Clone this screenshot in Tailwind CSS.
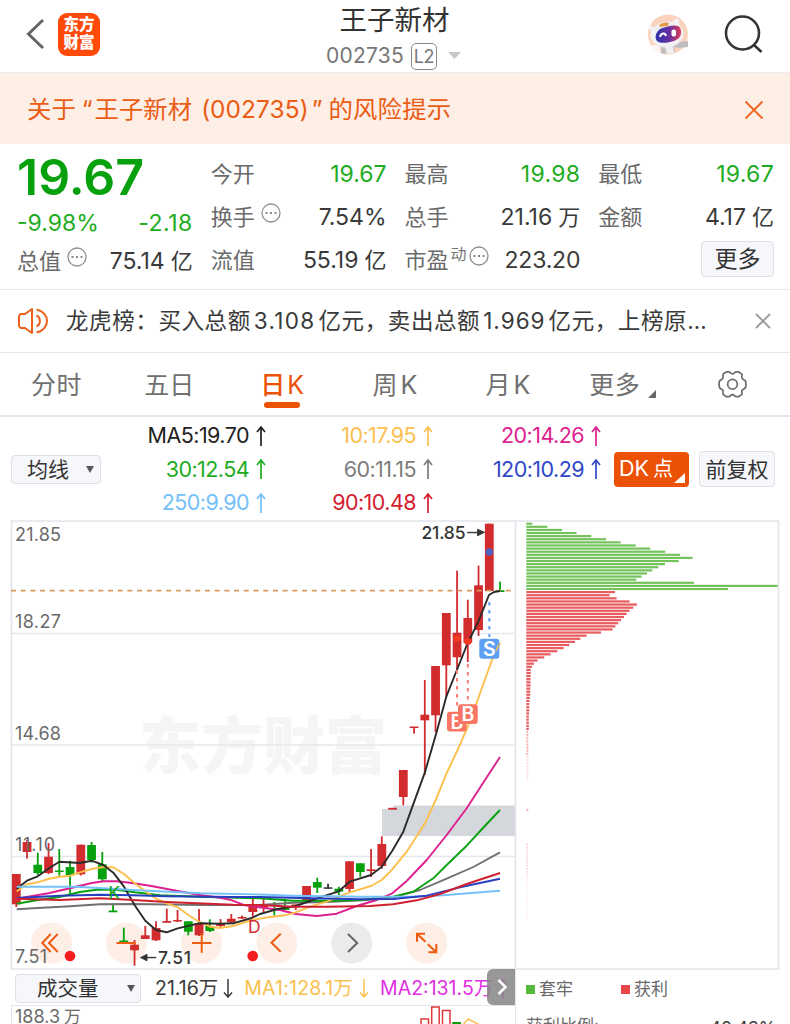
<!DOCTYPE html>
<html lang="zh-CN">
<head>
  <meta charset="UTF-8" />
  <meta name="viewport" content="width=device-width, initial-scale=1.0"/>
  <title>王子新材 002735</title>
  <script src="https://cdn.jsdelivr.net/npm/@tailwindcss/browser@4"></script>
</head>
<body class="w-[790px] h-[1024px] overflow-hidden bg-white text-[#3a3a3a] font-['Inter','Noto_Sans_CJK_SC',sans-serif] whitespace-nowrap">

  <!-- Header -->
  <header class="h-[73px] border-b border-[#ececf0] grid grid-cols-[1fr_auto_1fr] items-center">
    <div class="flex items-center pl-[25px] pb-[6px]">
      <svg class="w-[20px] h-[34px]" viewBox="0 0 20 34" fill="none" stroke="#666" stroke-width="3"><path d="M18 3 3.500 17 18 31"/></svg>
      <div class="ml-[13px] w-[42px] h-[43px] rounded-[9px] bg-[#ff4a0a] text-white font-black text-[15.500px] leading-[18px] flex flex-col items-center justify-center">
        <span>东方</span>
        <span>财富</span>
      </div>
    </div>
    <div class="flex flex-col items-center pt-[2px] pr-[3px]">
      <h1 class="text-[27.500px] leading-[36px] text-[#333] pl-[2px]">王子新材</h1>
      <div class="flex items-center h-[36px] text-[#777]">
        <span class="text-[21px] tracking-[0.200px]">002735</span>
        <span class="ml-[7px] w-[26px] h-[27px] border-[1.500px] border-[#8a8a8a] rounded-[5px] text-[18px] flex items-center justify-center tracking-[-0.500px]">L2</span>
        <svg class="ml-[11px] w-[13px] h-[8px]" viewBox="0 0 13 8"><path d="M0 0h13L6.500 7z" fill="#c8c8c8"/></svg>
      </div>
    </div>
    <div class="flex items-center justify-end pr-[26px] pb-[5px]">
      <svg class="w-[42px] h-[42px]" viewBox="0 0 42 42">
        <circle cx="21" cy="20.500" r="20" fill="#fbd3bd"/>
        <path d="M12 32c4-3 12-3 15 0l5-4 9-1v6l-9 1-5-1 1 5-7 2-8-1 2-5z" fill="#c0bdc1"/>
        <path d="M4 31l8 0 2 8c-4-1-8-4-10-8z" fill="#fdf6f2"/>
        <path d="M18 33h8l1 6-7 1z" fill="#f1eeee"/>
        <ellipse cx="20" cy="20.500" rx="16.500" ry="13" fill="#f1f0f3" transform="rotate(-8 20 20.500)"/>
        <path d="M25 8c4-4 6-4 7-2l1 7zM4 17c-3-3-3-5-1-6l5 3z" fill="#f3f2f4"/>
        <path d="M12 11c3-2 6-3 10-2l-1 3-8 1z" fill="#e79a4c"/>
        <path d="M14 14.500c6-2 12-4 17-2.500 4 2 4 9 1 12-4 4-14 5.500-19 4.500-6-1-6-10 1-14z" fill="url(#visor)"/>
        <path d="M13 23c1-4 5-5 6-1" fill="none" stroke="#fff" stroke-width="2"/>
        <rect x="24.500" y="15.500" width="4.500" height="7" rx="2" fill="#fff"/>
        <defs><linearGradient id="visor"><stop offset="0" stop-color="#2b34a8"/><stop offset=".55" stop-color="#6a2fa0"/><stop offset="1" stop-color="#e0405a"/></linearGradient></defs>
      </svg>
      <svg class="ml-[35px] w-[40px] h-[40px]" viewBox="0 0 40 40" fill="none" stroke="#333" stroke-width="2.500"><circle cx="18.500" cy="18" r="16.500"/><path d="m29.500 29.500 8 7.500"/></svg>
    </div>
  </header>

  <!-- Risk banner -->
  <div class="h-[71px] bg-[#fdeee6] text-[#eb5c14] text-[24.400px] flex items-center pt-[2px] pl-[27px] pr-[26px]">
    <span>关于</span>
    <span class="ml-[6px]">“</span>
    <span class="ml-[2px]">王子新材</span>
    <span class="ml-[9px] tracking-[0.100px]">(002735)</span>
    <span class="ml-[3px]">”</span>
    <span class="ml-[6px] tracking-[0.200px]">的风险提示</span>
    <svg class="ml-auto w-[20px] h-[20px]" viewBox="0 0 20 20" stroke="#ee6a26" stroke-width="2"><path d="m1.500 1.500 17 17M18.500 1.500l-17 17"/></svg>
  </div>

  <!-- Quote -->
  <section class="h-[146px] border-b border-[#e8e8ea] pt-[9px] pl-[17px] pr-[16px] grid grid-cols-4 gap-x-[18px] text-[23px]">
    <div>
      <div class="h-[49px] flex items-center text-[50px] font-semibold text-[#07a10d]">19.67</div>
      <div class="h-[43px] flex items-center justify-between text-[#1dac22]"><span>-9.98%</span><span class="tracking-[0.500px]">-2.18</span></div>
      <div class="h-[32px] flex items-center">
        <span class="text-[22px] text-[#6a6a6a]">总值</span>
        <svg class="ml-[6px] -mt-[9px] w-[20px] h-[20px]" viewBox="0 0 20 20"><circle cx="10" cy="10" r="9" fill="none" stroke="#909090" stroke-width="1.300"/><path d="M4.500 9h2v2h-2zM9 9h2v2H9zM13.500 9h2v2h-2z" fill="#888"/></svg>
        <span class="ml-auto">75.14<span class="ml-[6px] text-[22px]">亿</span></span>
      </div>
    </div>
    <div>
      <div class="h-[43px] flex items-center justify-between"><span class="text-[22px] text-[#6a6a6a]">今开</span><span class="text-[#1dac22]">19.67</span></div>
      <div class="h-[43px] flex items-center">
        <span class="text-[22px] text-[#6a6a6a]">换手</span>
        <svg class="ml-[6px] -mt-[9px] w-[20px] h-[20px]" viewBox="0 0 20 20"><circle cx="10" cy="10" r="9" fill="none" stroke="#909090" stroke-width="1.300"/><path d="M4.500 9h2v2h-2zM9 9h2v2H9zM13.500 9h2v2h-2z" fill="#888"/></svg>
        <span class="ml-auto">7.54%</span>
      </div>
      <div class="h-[43px] flex items-center justify-between"><span class="text-[22px] text-[#6a6a6a]">流值</span><span>55.19<span class="ml-[6px] text-[22px]">亿</span></span></div>
    </div>
    <div>
      <div class="h-[43px] flex items-center justify-between"><span class="text-[22px] text-[#6a6a6a]">最高</span><span class="text-[#1dac22] tracking-[0.300px]">19.98</span></div>
      <div class="h-[43px] flex items-center justify-between"><span class="text-[22px] text-[#6a6a6a]">总手</span><span>21.16<span class="ml-[6px] text-[22px]">万</span></span></div>
      <div class="h-[43px] flex items-center">
        <span class="text-[22px] text-[#6a6a6a]">市盈</span>
        <span class="ml-[2px] -mt-[14px] text-[16px] text-[#777]">动</span>
        <svg class="ml-[2px] -mt-[9px] w-[20px] h-[20px]" viewBox="0 0 20 20"><circle cx="10" cy="10" r="9" fill="none" stroke="#909090" stroke-width="1.300"/><path d="M4.500 9h2v2h-2zM9 9h2v2H9zM13.500 9h2v2h-2z" fill="#888"/></svg>
        <span class="ml-auto tracking-[-0.200px]">223.20</span>
      </div>
    </div>
    <div>
      <div class="h-[43px] flex items-center justify-between"><span class="text-[22px] text-[#6a6a6a]">最低</span><span class="text-[#1dac22] tracking-[0.300px]">19.67</span></div>
      <div class="h-[43px] flex items-center justify-between"><span class="text-[22px] text-[#6a6a6a]">金额</span><span>4.17<span class="ml-[6px] text-[22px]">亿</span></span></div>
      <div class="h-[43px] flex items-center justify-end -mt-[2px]">
        <button class="w-[73px] h-[36px] pt-[2px] border border-[#e0e0e6] rounded-[4px] bg-[#f6f7fa] text-[23px] leading-none text-[#333]">更多</button>
      </div>
    </div>
  </section>

  <!-- News ticker -->
  <div class="h-[63px] border-b border-[#e8e8ea] flex items-center pl-[17px] pr-[19px] text-[22.500px]">
    <svg class="w-[32px] h-[28px]" viewBox="0 0 32 28" fill="none" stroke="#ee5f1a" stroke-width="2" stroke-linejoin="round"><path d="M15 2v24l-7-5H3.500L2 19V9l1.500-2H8zM19.500 8.500c4.500 2 4.500 9 0 11M19.500 2.500c14 3 14 20 0 23"/></svg>
    <p class="ml-[17px] tracking-[0.600px]">龙虎榜：买入总额<span class="mx-[3px] tracking-[1.300px]">3.108</span>亿元，卖出总额<span class="mx-[3px] tracking-[1px]">1.969</span>亿元，上榜原…</p>
    <svg class="ml-auto w-[16px] h-[16px]" viewBox="0 0 16 16" stroke="#999" stroke-width="1.800"><path d="m1 1 14 14M15 1 1 15"/></svg>
  </div>

  <!-- Period tabs -->
  <nav class="h-[64px] border-b-2 border-[#e4e4ea] grid grid-cols-7 items-center text-[25px] text-[#707070]">
    <span class="pt-[3px] text-center tracking-[0.500px]">分时</span>
    <span class="pt-[3px] text-center">五日</span>
    <span class="relative pt-[3px] text-center text-[#ec5206] font-medium">日<span class="ml-[2px] font-normal">K</span><i class="absolute left-[38px] bottom-[-4px] w-[36px] h-[6px] rounded-full bg-[#ec5206]"></i></span>
    <span class="pt-[3px] text-center">周<span class="ml-[3px]">K</span></span>
    <span class="pt-[3px] text-center">月<span class="ml-[3px]">K</span></span>
    <span class="flex items-center justify-center pt-[3px] pl-[4px] tracking-[0.500px]">更多<svg class="ml-[8px] mt-[17px] w-[8px] h-[8px]" viewBox="0 0 8 8"><path d="M8 0v8H0z" fill="#666"/></svg></span>
    <svg class="justify-self-center mr-[2px] mt-[1px] w-[29px] h-[29px]" viewBox="0 0 30 30" fill="none" stroke="#6c6c6c" stroke-width="1.800" stroke-linejoin="round"><path d="M8.500 2h3c1 0 1.500 2 3.500 2s2.500-2 3.500-2h3l3 2c1 1-.5 3 .5 4.500S28 10.500 28.500 11.500l.5 3.500-.5 3c-.5 1.500-2.500 1.500-3.500 3s.5 3.500-.5 4.500l-3 2h-3c-1 0-1.500-2-3.500-2s-2.500 2-3.500 2h-3l-3-2c-1-1 .5-3-.5-4.500s-3-1.500-3.500-3L1 15l.5-3.500C2 10.500 4 10 5 8.500S4.500 5 5.500 4z"/><circle cx="15" cy="14.800" r="5"/></svg>
  </nav>

  <!-- Moving averages -->
  <section class="h-[100px] flex items-center pl-[11px] pt-[4px]">
    <button class="w-[90px] h-[29px] border border-[#dedee4] rounded-[4px] bg-[#f6f7fa] flex items-center pl-[15px] text-[21px] leading-none text-[#333]">均线<svg class="ml-[17px] w-[8px] h-[7px]" viewBox="0 0 9 8"><path d="M0 0h9L4.500 8z" fill="#555"/></svg></button>
    <div id="averages" class="w-[500px] grid grid-cols-[165px_167px_168px] auto-rows-[33.500px] text-[21.500px] tracking-[-0.550px]"></div>
    <button class="ml-[13px] w-[75px] h-[35px] rounded-[4px] bg-[#ec5206] text-white flex items-center pl-[5px] text-[21.500px] leading-none">DK<span class="ml-[4px] text-[20px]">点</span><svg class="mt-[18px] ml-[1px] w-[11px] h-[10px]" viewBox="0 0 11 10"><path d="M11 0v10H0z" fill="#fff"/></svg></button>
    <button class="ml-[10px] w-[76px] h-[36px] border border-[#e0e0e6] rounded-[4px] bg-[#f6f7fa] text-[21px] leading-none text-[#333]">前复权</button>
  </section>

  <!-- K-line chart and cost distribution -->
  <svg class="block w-[790px] h-[453px]" viewBox="0 517 790 453" fill="none">
    <text x="139" y="769" font-size="62" font-weight="900" fill="#f5f5f5" textLength="248">东方财富</text>
    <rect x="382" y="809" width="12" height="27" fill="#d4d7dc"/>
    <rect x="393" y="805.500" width="122" height="30.500" fill="#d4d7dc"/>
    <path d="M11 633.500h504M11 745h504M11 856.500h504" stroke="#e6e7ee" stroke-width="1.500"/>
    <path d="M11.500 521h767v448H11.500zM515.500 521v448" stroke="#e4e5eb" stroke-width="1.700"/>
    <g fill="#fdeee6">
      <circle cx="51.500" cy="943" r="20.500"/><circle cx="126.500" cy="943" r="20.500"/><circle cx="201.500" cy="943" r="20.500"/>
      <circle cx="276.800" cy="943" r="20.500"/><circle cx="351.700" cy="943" r="20.500" fill="#ebebeb"/><circle cx="426.700" cy="943" r="20.500"/>
    </g>
    <g id="candles"></g>
    <g fill="#6a6a6a" font-size="18">
      <text x="15" y="541" textLength="46">21.85</text>
      <text x="15" y="627.500" textLength="46">18.27</text>
      <text x="15" y="739.500" textLength="46">14.68</text>
      <text x="15" y="851" textLength="40">11.10</text>
      <text x="15" y="962.500" textLength="32">7.51</text>
    </g>
    <path d="M11 590.700h500" stroke="#d69a62" stroke-width="1.700" stroke-dasharray="5 4.700"/>
    <g id="lines" stroke-width="1.900" stroke-linejoin="round"></g>
    <!-- Trade marks -->
    <path d="M457 670v37M467.800 664v38" stroke="#f88070" stroke-width="2" stroke-dasharray="3.500 4.500"/>
    <path d="M489.300 602v35" stroke="#5c9ff5" stroke-width="2" stroke-dasharray="3.500 4.500"/>
    <circle cx="489.300" cy="552" r="3.700" fill="#4c62c4"/>
    <circle cx="457" cy="638.500" r="3.600" fill="#f33a20"/>
    <circle cx="467.800" cy="641.500" r="3.600" fill="#f33a20"/>
    <g font-weight="600" font-size="19.500" text-anchor="middle">
      <rect x="447" y="711.700" width="19.700" height="19.700" rx="3" fill="#f97665"/>
      <text x="457" y="728.700" fill="#fff">B</text>
      <rect x="458" y="704.300" width="19.700" height="19.700" rx="3" fill="#f97665"/>
      <text x="468" y="721.200" fill="#fff">B</text>
      <rect x="479.300" y="638.800" width="20" height="20" rx="3" fill="#5c9ff5"/>
      <text x="489.300" y="655.900" fill="#fff">S</text>
    </g>
    <path d="m496 651 2.500-6" stroke="#fcbf4a" stroke-width="1.500"/>
    <g font-size="17.500" font-weight="500" fill="#333">
      <text x="421.500" y="539" textLength="44">21.85</text>
      <text x="158" y="964" textLength="33">7.51</text>
      <path d="M467.500 532.300h10v-3l7 3-7 3.500v-3h-10zM156 957.300h-9v-3l-6.500 3.300 6.500 3.200v-3h9z" stroke="#333" stroke-width=".9"/>
    </g>
    <text x="108.500" y="899" font-size="17" fill="#07a10d">K</text>
    <text x="248" y="932.500" font-size="17.500" fill="#d22c2f">D</text>
    <circle cx="70" cy="956" r="5.300" fill="#f51d20"/>
    <circle cx="252.700" cy="956" r="5.300" fill="#f51d20"/>
    <!-- Chart controls -->
    <g stroke="#ee5c12" stroke-width="2">
      <path d="M50.700 934 42.300 943l8.400 9M57.700 934 49 943l8.700 9"/>
      <path d="M116.500 943h19.200M192 943h19.500M201.700 933.300v19.500"/>
      <path d="m280.700 933.700-9.200 9 9.200 9"/>
      <path d="m348 934 9.200 9-9.200 9" stroke="#666"/>
      <path d="M425 933.700h-8v8M417 933.700l8.500 8M436.300 944v8.300h-8M436.300 952.300l-8.500-8"/>
    </g>
    <g id="chips"></g>
  </svg>

  <!-- Volume and legend -->
  <section class="h-[54px] flex">
    <div class="w-[516px] border-r-[1.500px] border-[#e4e5eb]">
      <div class="relative h-[35px] flex items-center pt-[1px] pl-[15px] text-[19.500px]">
        <button class="w-[126px] h-[29px] pt-[2px] border border-[#dedee4] rounded-[4px] bg-[#f6f7fa] flex items-center pl-[21px] text-[20.500px] leading-none text-[#333]">成交量<svg class="ml-[28px] mb-[2px] w-[8px] h-[7px]" viewBox="0 0 9 8"><path d="M0 0h9L4.500 8z" fill="#555"/></svg></button>
        <span class="ml-[14px] pt-[1px] flex items-center">21.16万<svg class="ml-[5px] w-[10px] h-[19px]" viewBox="0 0 10 19" fill="none" stroke="#3a3a3a" stroke-width="1.500"><path d="M5 0v18M1 13.500l4 4.500 4-4.500"/></svg></span>
        <span class="ml-[11px] pt-[1px] flex items-center text-[#fbc04e] tracking-[0.200px]">MA1:128.1万<svg class="ml-[6px] w-[10px] h-[19px]" viewBox="0 0 10 19" fill="none" stroke="#fbc04e" stroke-width="1.500"><path d="M5 0v18M1 13.500l4 4.500 4-4.500"/></svg></span>
        <span class="ml-[11px] pt-[1px] flex items-center text-[#e02fe0]">MA2:131.5万<svg class="ml-[5px] w-[10px] h-[19px]" viewBox="0 0 10 19" fill="none" stroke="#e02fe0" stroke-width="1.500"><path d="M5 19V1M1 5.500 5 1l4 4.500"/></svg></span>
        <span class="absolute right-0 -top-[1px] w-[28px] h-[36px] rounded-l-[6px] bg-[#858585]/85 flex items-center justify-center"><svg class="ml-[2px] w-[10px] h-[18px]" viewBox="0 0 10 18" fill="none" stroke="#fff" stroke-width="2.600"><path d="m1.500 2 7 7-7 7"/></svg></span>
      </div>
      <div class="ml-[11px] h-[19px] border-t-[1.500px] border-l-[1.500px] border-[#e4e5eb] flex justify-between overflow-hidden">
        <span class="pl-[3px] text-[18px] leading-[22px] text-[#6a6a6a]">188.3<span class="ml-[4px] text-[17px]">万</span></span>
        <svg class="w-[96px] h-[19px]" viewBox="420 1005 96 19" fill="none" stroke="#e0393c" stroke-width="1.500"><path d="M422 1025v-7h7.500v7M432.700 1025v-19h7.500v19M443.500 1025v-15.500h7.500v15.500"/><path d="M453.300 1021h8.700v4h-8.700z" fill="#07a10d" stroke="none"/><path d="m463 1025 6-7 12 6" stroke="#fcbf4a"/></svg>
      </div>
    </div>
    <div class="flex-1 pl-[10px] pr-[14px] text-[17px] text-[#6a6a6a]">
      <div class="h-[38px] pt-[1px] flex items-center">
        <i class="w-[9px] h-[9px] bg-[#57b83e]"></i><span class="ml-[4px] w-[82px]">套牢</span>
        <i class="w-[9px] h-[9px] bg-[#ea4548]"></i><span class="ml-[4px]">获利</span>
      </div>
      <div class="flex justify-between leading-[37px]"><span>获利比例:</span><span class="text-[17.500px] leading-[40px] text-[#3a3a3a]">40.43%</span></div>
    </div>
  </section>

  <script>
    // [label, color]
    const averages = [
      ["MA5:19.70", "#222"], ["10:17.95", "#fbc04e"], ["20:14.26", "#dd1f8f"],
      ["30:12.54", "#1dac22"], ["60:11.15", "#7d7d7d"], ["120:10.29", "#3048c8"],
      ["250:9.90", "#74c0f8"], ["90:10.48", "#d3202f"],
    ];
    document.getElementById("averages").innerHTML = averages.map(([label, color]) => `
      <span class="flex items-center justify-end" style="color:${color}">${label}
        <svg class="ml-[7px] w-[10px] h-[20px]" viewBox="0 0 10 20" fill="none" stroke="currentColor" stroke-width="1.700"><path d="M5 20V1M1 6l4-5 4 5"/></svg>
      </span>`).join("");

    // [body top, body bottom, wick top, wick bottom, color]
    const colors = { r: "#d22c2f", g: "#07a10d", k: "#333" };
    const candles = [
      [874, 904.3, 874, 907, "r"], [842, 852, 840, 858.6, "r"], [864.7, 873, 852.7, 875, "g"], [856.7, 873, 843, 874, "r"],
      [870.5, 872, 849, 875.7, "g"], [867, 875.3, 860.7, 896, "g"], [844.7, 874.3, 844.7, 875.5, "r"], [845, 860, 842, 862.7, "g"],
      [864.3, 879.3, 852, 881, "g"], [910.5, 912.3, 904.5, 912, "g"], [940.5, 942, 927.7, 942, "g"], [944.7, 950.3, 940, 965.7, "r"],
      [935.3, 939, 926, 939, "r"], [928, 940.3, 921.3, 941, "r"], [921, 922.8, 908.7, 922, "r"], [920, 921.5, 910, 922, "r"],
      [921.3, 931.7, 921, 935.3, "g"], [923.3, 935.3, 909, 936, "r"], [926, 931, 919.3, 932, "g"], [923, 926, 919, 927, "r"],
      [918.7, 922.3, 914, 923, "r"], [917, 918.5, 915.5, 919, "r"], [905.3, 912, 896.7, 916.7, "r"], [906, 907.7, 898.7, 912, "r"],
      [908, 909.5, 902, 915.7, "g"], [906.5, 910, 899, 910, "g"], [904.5, 906.5, 904.5, 910, "r"], [886, 900, 886, 900, "r"],
      [882, 887.7, 877.7, 893, "g"], [887.3, 888.8, 883.7, 888.7, "k"], [888.7, 891.7, 886.7, 895, "g"], [861.3, 889, 861.3, 892.7, "r"],
      [863.3, 872, 863.3, 876.7, "g"], [869.3, 871, 849, 877, "r"], [844, 866, 836.3, 868.7, "r"], [807.8, 809.7, 808, 809, "r"],
      [770, 797, 770, 805.3, "r"], [726.5, 728, 727, 733.7, "r"], [714.7, 720.3, 680, 775, "r"], [666, 715.3, 666, 732, "r"],
      [613, 665.3, 613, 696.7, "r"], [632.7, 657.3, 570.7, 670, "r"], [618, 642.7, 599.7, 662, "r"], [585.3, 630, 565.7, 636, "r"],
      [523.7, 591, 523.7, 591, "r"], [590.2, 592, 581.7, 592, "g"],
    ];
    document.getElementById("candles").innerHTML = candles.map(([top, bottom, high, low, c], i) => {
      const x = 16.3 + i * 10.75;
      return `<rect x="${x - 4.4}" y="${top}" width="8.800" height="${bottom - top}" fill="${colors[c]}"/>
        <rect x="${x - 0.9}" y="${high}" width="1.800" height="${low - high}" fill="${colors[c]}"/>`;
    }).join("");

    const lines = [
      ["#707070", "16.7,909.3 37.7,908 70,906.3 100,904.3 133,904 200,905 260,905 293,902.7 326.7,902 366.7,900 393,897.3 420,890 446.7,878.7 473.3,867 500,852.3"],
      ["#07a10d", "16.7,903.7 37.7,900 59.3,897 80,892 96.7,889.7 116.7,889.7 134.7,892.3 160,895.3 200,896.7 260,898.3 293,900.7 326.7,900.7 360,900 393.3,896.7 413.3,891.7 433.3,878.3 446.7,865 466.7,845.7 486.7,824 500,810"],
      ["#dd1f8f", "16.7,898.7 48.3,893.3 70,888.3 91.7,883 103.3,881.3 116.7,881.3 130,882.7 150,885.7 177.7,891 200,895 220,897.7 230,899.7 245,905.3 263,907.7 280,910 295.7,914 316.7,916 336.7,913.7 356.7,906 376.7,900 392.3,893.3 406.7,881 426.7,860 446.7,835 466.7,808.3 485,780 500,757"],
      ["#fcbf4a", "16.7,891.3 27,884.3 37.7,882.3 48.3,879 59.3,876.7 70,875.7 80,872.3 91.7,869 103.3,867 113.3,867.3 124,874 134.7,883.3 145.3,891.3 156,898.7 166.7,903.3 177.7,907.3 188.3,915 199,921.7 210,926.7 220,928 233,926 251.7,920 270,917 285,915.3 295.7,912.3 310,906.7 326.7,901.7 349.7,892.3 371,886 381.7,880 392.3,869.3 406.7,851.7 425,823.3 435,801.7 446.3,774 458.3,748.3 470,721.7 480,693.3 492,660 500,643"],
      ["#2b2b2b", "16.7,888.7 27,880.7 37.7,876.3 48.3,868.7 59.3,861.7 80,863 91.7,860.7 103.3,865 113.3,872.7 124,886.7 134.7,905.3 145.3,920.7 156,930 166.7,932.3 177.7,928.3 199,923.3 220,923.7 233,923.3 251.7,918 260,914 276.7,909.3 295.7,906 310,901 320,897.3 338.7,891.3 349.7,881.7 371,875 381.7,866.7 392.3,850.7 403.3,831.7 424.8,772.7 436.7,731.7 446.3,696.7 455.7,673 467.7,643 478.3,621.7 489,595 494,592 500,591"],
      ["#74c0f8", "16.7,886.7 76.7,886.7 133,890 200,893.3 260,894.5 293,895.7 360,896.7 410,896.7 443,895.3 500,890.7"],
      ["#2840c0", "16.7,898 60,895.7 100,894.7 133,895.3 166.7,896.3 233,897 260,897 310,898.3 360,899.3 393,899 426.7,895.7 460,887.3 500,878.7"],
      ["#cf2030", "16.7,898.7 60,900 100,898.3 133,900 166.7,902 233,904.7 260,905 293,906.7 326.7,906.7 370,906 393,904.3 416.7,900.3 440,894 466.7,884 500,873"],
    ];
    document.getElementById("lines").innerHTML = lines.map(([c, points]) => `<polyline points="${points}" stroke="${c}"/>`).join("");

    // Cost distribution bars, from the highest price down
    const trapped = [6, 21, 35.7, 50.3, 65, 79.7, 94.3, 109.3, 124, 139, 153.7, 166.3, 152.3, 138.7, 132, 126, 120.7, 115.3, 110, 167.7, 251.3, 201.7];
    const profit = [88.7, 83.3, 90.3, 103.3, 110.7, 107, 103.3, 100.3, 97.7, 94.7, 92, 89, 86.3, 74.7, 60.3, 54, 48.7, 43, 37.3, 31, 24.3, 18, 11.3, 7.7, 5.7,
      4.5, 4.5, 4.3, 4.3, 4.3, 4.3, 4, 4, 4, 3.5, 3.2, 3, 3, 3, 2.7, 2.5, 2.5, 2.5, 2.5, 2.5];
    const bar = (w, i, fill) => `<rect x="526.300" y="${522.6 + i * 3.11}" width="${w}" height="2.200" fill="${fill}"/>`;
    let chips = trapped.map((w, i) => bar(w, i, "#74c25c")).join("");
    chips += profit.map((w, i) => bar(w, i + trapped.length, "#e85b5e")).join("");
    for (let i = 67; i < 83; i++) chips += bar(2, i, i < 75 ? "#f5b5b6" : "#fbe0e0");
    chips += bar(2, 92, "#f5b5b6");
    for (let i = 103; i < 128; i++) chips += bar(1.6, i, i < 113 ? "#fbd9d9" : "#fdf0f0");
    document.getElementById("chips").innerHTML = chips;
  </script>
</body>
</html>
